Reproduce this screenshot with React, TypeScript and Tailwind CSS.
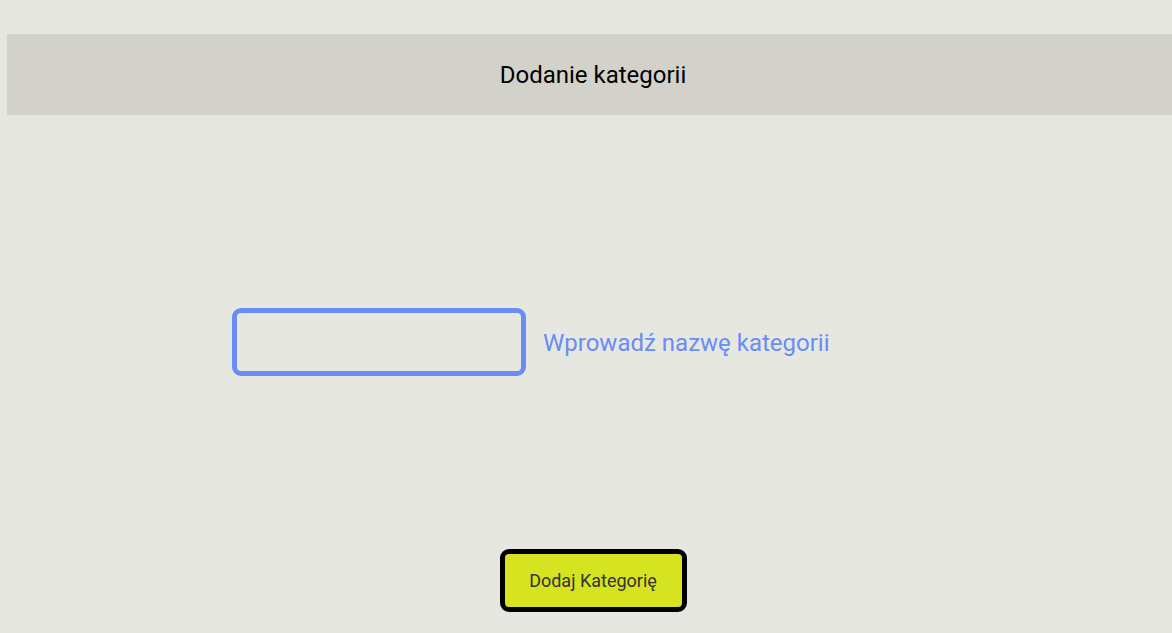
import React from "react";

const App = () => {
  const [name, setName] = React.useState("");

  return (
    <div
      className="min-h-screen overflow-hidden bg-[#e7e7e1] pt-[34px] pl-[7px]"
      style={{ fontFamily: "Roboto, 'Noto Sans', sans-serif" }}
    >
      <div className="w-[calc(100%+7px)]">
        {/* Header */}
        <div className="flex h-[81px] w-full items-center justify-center bg-[#d3d2ca]">
          <h1 className="pt-[1px] text-[24px] text-black">Dodanie kategorii</h1>
        </div>

        {/* Category name */}
        <div className="mt-[193px] flex items-center gap-[17px] pl-[225px]">
          <input
            value={name}
            onChange={(e) => setName(e.target.value)}
            className="h-[68px] w-[294px] rounded-[9px] border-[5px] border-[#6a8cf5] bg-transparent px-3 text-lg outline-none"
          />
          <label className="pt-[1px] text-[24px] text-[#6a8cf5]">
            Wprowadź nazwę kategorii
          </label>
        </div>

        {/* Submit */}
        <div className="mt-[173px] flex w-full justify-center">
          <button className="h-[63px] w-[187px] rounded-[9px] border-[5px] border-black bg-[#d6e321] text-[18px] text-[#333333]">
            Dodaj Kategorię
          </button>
        </div>
      </div>
    </div>
  );
};

export default App;
